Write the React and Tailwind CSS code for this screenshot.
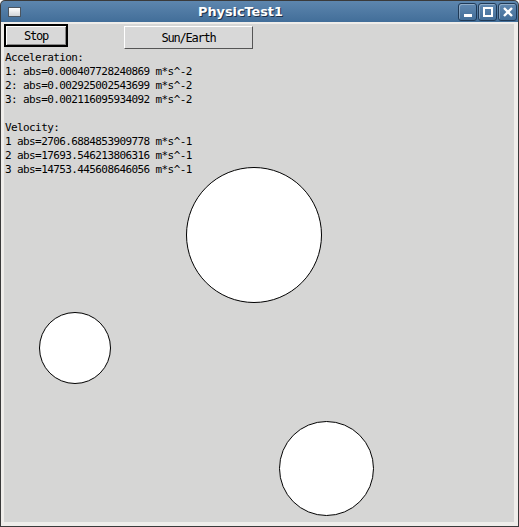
import React from "react";

const mono = { fontFamily: '"DejaVu Sans Mono", "Liberation Mono", monospace' };

const lines = [
  "Acceleration:",
  "1: abs=0.000407728240869 m*s^-2",
  "2: abs=0.002925002543699 m*s^-2",
  "3: abs=0.002116095934092 m*s^-2",
  "",
  "Velocity:",
  "1 abs=2706.6884853909778 m*s^-1",
  "2 abs=17693.546213806316 m*s^-1",
  "3 abs=14753.445608646056 m*s^-1",
];

const TitleButton = ({ children }) => (
  <div className="flex h-[18px] w-[19px] items-center justify-center rounded-[3px] border border-[#1f3a57] bg-gradient-to-b from-[#6088b0] to-[#436e98] shadow-[inset_1px_1px_0_rgba(255,255,255,0.3)]">
    {children}
  </div>
);

export default function App() {
  return (
    <div className="flex h-[527px] w-[519px] flex-col rounded-t-[5px] bg-[#3a3a3a] p-px">
      {/* title bar */}
      <div className="flex h-[21px] items-center rounded-t-[4px] bg-gradient-to-b from-[#5d86ae] to-[#426e99] pr-[1px]">
        <div className="ml-[7px] h-[10px] w-[13px] border border-[#4b5560] bg-gradient-to-b from-white to-[#d0d4d8]" />
        <div
          className="flex-1 pl-[2px] text-center text-[12.8px] font-bold text-white [text-shadow:1px_1px_0_#1e3047]"
          style={{ fontFamily: '"DejaVu Sans", sans-serif' }}
        >
          PhysicTest1
        </div>
        <div className="flex gap-px">
          <TitleButton>
            <div className="mt-[8px] h-[3px] w-[8px] bg-white" />
          </TitleButton>
          <TitleButton>
            <div className="h-[10px] w-[10px] border-2 border-white" />
          </TitleButton>
          <TitleButton>
            <svg width="10" height="10" viewBox="0 0 10 10">
              <path d="M1 1 L9 9 M9 1 L1 9" stroke="white" strokeWidth="2.4" />
            </svg>
          </TitleButton>
        </div>
      </div>

      {/* frame */}
      <div className="flex-1 bg-[#efedea] pb-[4px] pl-[3px] pr-[4px] pt-[2px]">
        <div className="relative h-full bg-[#d6d6d5]" style={mono}>
          <div className="flex h-[25px] items-start">
            <button className="flex h-[23px] w-[64px] items-center justify-center border-2 border-black bg-[#d8d8d8] text-[12px] tracking-[-1.2px] text-black shadow-[inset_1px_1px_0_#fff,inset_-1px_-1px_0_#888]">
              Stop
            </button>
            <button className="ml-[56px] mt-[2px] flex h-[23px] w-[129px] items-center justify-center border border-b-[#555] border-l-white border-r-[#555] border-t-white bg-[#d8d8d8] text-[12px] tracking-[-1.2px] text-black">
              Sun/Earth
            </button>
          </div>
          <div className="ml-px mt-[2px] text-[11px] leading-[14px] tracking-[-0.6px] text-black">
            {lines.map((l, i) => (
              <div key={i} className="h-[14px] whitespace-pre">
                {l}
              </div>
            ))}
          </div>

          {/* bodies */}
          <div className="absolute left-[182px] top-[143px] h-[136px] w-[136px] rounded-full border border-black bg-white" />
          <div className="absolute left-[35px] top-[288px] h-[72px] w-[72px] rounded-full border border-black bg-white" />
          <div className="absolute left-[275px] top-[397px] h-[95px] w-[95px] rounded-full border border-black bg-white" />
        </div>
      </div>
    </div>
  );
}
